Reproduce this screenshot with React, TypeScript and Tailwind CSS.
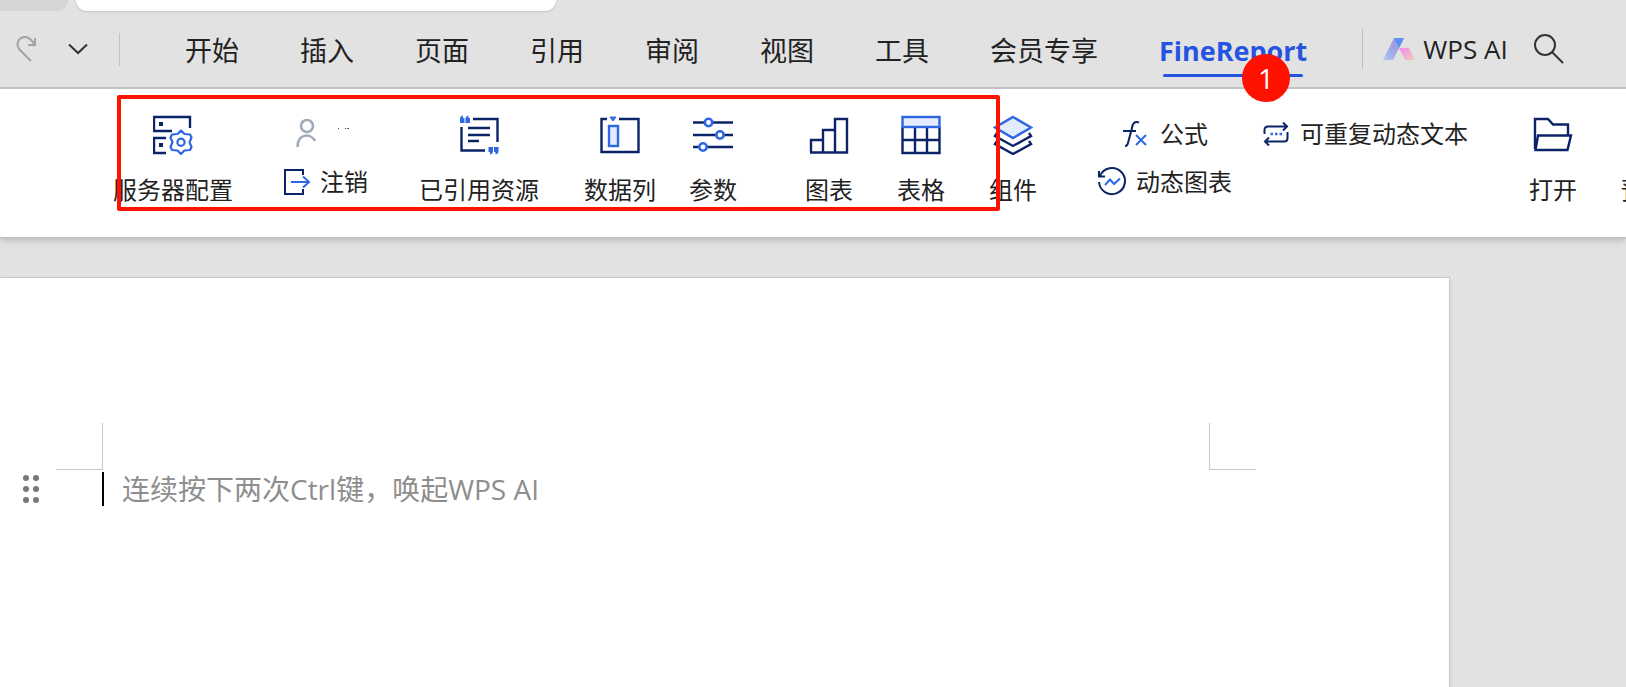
import type { ReactNode } from 'react';

const NAVY = '#0b2468';
const BLUE = '#2f66e4';

const menus = ['开始', '插入', '页面', '引用', '审阅', '视图', '工具', '会员专享'];

function ServerIcon() {
  return (
    <svg className="h-10 w-10" viewBox="0 0 40 40" fill="none" stroke={NAVY} strokeWidth="2.4">
      <path d="M37 13V2H1V16H19" />
      <path d="M13 23H1V38H13" />
      <path d="M6 9H10M6 30H10" strokeWidth="4" />
      <path
        d="M28 15.500L31.500 19L37 19.500L38.500 22.500L36.500 27.200L38.500 32L37 35L31.500 35.500L28 39L24.500 35.500L19 35L17.500 32L19.500 27.200L17.500 22.500L19 19.500L24.500 19Z"
        stroke={BLUE}
        strokeWidth="2.2"
        strokeLinejoin="round"
      />
      <circle cx="28" cy="27.2" r="3.6" stroke={BLUE} strokeWidth="2.2" />
    </svg>
  );
}

function ResourceIcon() {
  return (
    <svg className="h-10 w-10" viewBox="0 0 40 40" fill="none" stroke={NAVY} strokeWidth="2.4">
      <path d="M14 4H38.500V27M26 35.500H2.500V12" />
      <path d="M9 13H31M9 20H31M9 26H20" />
      <g fill={BLUE} stroke="none">
        <path d="M1 8V4Q1 1 4 0.500V3H5.500V8ZM6.500 8V4Q6.500 1 9.500 0.500V3H11V8Z" />
        <path d="M29.500 32H34V36Q34 39 31 39.500V37H29.500ZM35 32H39.500V36Q39.500 39 36.500 39.500V37H35Z" />
      </g>
    </svg>
  );
}

function ColumnIcon() {
  return (
    <svg className="h-10 w-10" viewBox="0 0 40 40" fill="none" stroke={NAVY} strokeWidth="2.4">
      <path d="M7 4H1.500V37H38.500V4H19" />
      <path d="M10 2H16L13 6Z" fill={BLUE} stroke={BLUE} strokeWidth="1" />
      <rect x="9" y="11" width="9" height="20" fill="#e3ecff" stroke={BLUE} />
    </svg>
  );
}

function ParamIcon() {
  return (
    <svg className="h-10 w-10" viewBox="0 0 40 40" fill="none" stroke={NAVY} strokeWidth="2.6">
      <path d="M0 7.500H40M0 20H40M0 32H40" />
      <g fill="#fff" stroke={BLUE}>
        <circle cx="15.500" cy="7.500" r="3.700" />
        <circle cx="27" cy="20" r="3.700" />
        <circle cx="10" cy="32" r="3.700" />
      </g>
    </svg>
  );
}

function ChartIcon() {
  return (
    <svg className="h-10 w-10" viewBox="0 0 40 40" fill="none" stroke={NAVY} strokeWidth="2.4">
      <path d="M2 37.500V25H14V37.500M14 25V15H26V37.500M26 15V4H38V37.500H1" />
    </svg>
  );
}

function TableIcon() {
  return (
    <svg className="h-10 w-10" viewBox="0 0 40 40" fill="none" stroke={NAVY} strokeWidth="2.4">
      <path d="M1.500 12V38H38.500V12M14 12V38M26 12V38M2 25H38" />
      <rect x="1.500" y="2" width="37" height="10" fill="#e3ecff" stroke={BLUE} />
    </svg>
  );
}

function LayersIcon() {
  return (
    <svg className="h-10 w-10" viewBox="0 0 40 40" fill="none" stroke={NAVY} strokeWidth="2.4">
      <path d="M4 18L2 21L20 31L38 21L36 18" />
      <path d="M4 26L2 29L20 39L38 29L36 26" />
      <path d="M20 2L38 12.500L20 23L2 12.500Z" fill="#e3ecff" stroke={BLUE} />
    </svg>
  );
}

function FolderIcon() {
  return (
    <svg className="h-10 w-10" viewBox="0 0 40 40" fill="none" stroke={NAVY} strokeWidth="2.4">
      <path d="M2 34V4H15L20 9.500H35V20" />
      <path d="M5 20.500H38L34.500 35H2.500Z" />
    </svg>
  );
}

function Tool({ label, className, children }: { label: string; className: string; children?: ReactNode }) {
  return (
    <button className={`flex shrink-0 flex-col items-center gap-[18px] pt-[26px] ${className}`}>
      {children}
      <span className="text-2xl leading-[34px] whitespace-nowrap">{label}</span>
    </button>
  );
}

function Corner({ className }: { className: string }) {
  return <div className={`h-[47px] w-[47px] border-b border-[#c8c8c8] ${className}`} />;
}

export default function App() {
  return (
    <div className="relative flex min-h-screen flex-col overflow-hidden bg-[#e2e2e2] font-['Open_Sans','Noto_Sans_CJK_SC',sans-serif] text-[#222]">
      <div className="flex h-[11px] gap-2">
        <div className="w-[68px] rounded-br-xl bg-[#d5d5d5]" />
        <div className="w-[480px] rounded-b-xl bg-white shadow-sm" />
      </div>

      <nav className="flex h-[78px] shrink-0 items-center border-b-2 border-[#c3c3c3]">
        <button aria-label="恢复" className="ml-4 shrink-0">
          <svg className="h-[26px] w-5" viewBox="0 0 20 26" fill="none" stroke="#a3a3a3" strokeWidth="2">
            <path d="M15 25L3.500 13.500C-1 8 3 1 9 1C13.500 1 16.500 5 19 9" />
            <path d="M19 2V9H12" />
          </svg>
        </button>
        <button aria-label="更多" className="ml-8 shrink-0">
          <svg className="h-3 w-5" viewBox="0 0 20 12" fill="none" stroke="#333" strokeWidth="2">
            <path d="M1 1.500L10 10L19 1.500" />
          </svg>
        </button>
        <div className="ml-[31px] h-[33px] w-px shrink-0 bg-[#c3c3c3]" />
        <div className="ml-[65px] flex shrink-0 items-center gap-[61px] pt-1 text-[27px] leading-10">
          {menus.map((name) => (
            <button key={name} className="whitespace-nowrap">
              {name}
            </button>
          ))}
          <button className="relative font-bold text-[#2454e0]">
            FineReport
            <span className="absolute inset-x-1 -bottom-[6px] h-[3px] rounded-full bg-[#2454e0]" />
            <span className="absolute top-[23px] left-[83px] z-20 flex h-12 w-12 items-center justify-center rounded-full bg-[#ff1100] text-[28px] font-normal text-white">
              1
            </span>
          </button>
        </div>
        <div className="ml-[55px] h-10 w-px shrink-0 bg-[#bfbfbf]" />
        <button className="ml-5 flex shrink-0 items-center gap-2 text-[26px] whitespace-nowrap">
          <svg className="h-[22px] w-8" viewBox="0 0 32 22">
            <defs>
              <linearGradient id="wing" x1="1" y1="0" x2="0" y2="1">
                <stop offset="0" stopColor="#9c9be8" />
                <stop offset="0.45" stopColor="#a29fe4" />
                <stop offset="1" stopColor="#a9c8f5" />
              </linearGradient>
              <linearGradient id="foot" x1="0" y1="0" x2="1" y2="1">
                <stop offset="0" stopColor="#f08cf0" />
                <stop offset="1" stopColor="#f5cbb5" />
              </linearGradient>
            </defs>
            <path d="M11 0H21L10 22H0Z" fill="url(#wing)" />
            <path d="M11 0H21L16 10Z" fill="#5c90f8" />
            <path d="M16 10H26L32 22H22Z" fill="url(#foot)" />
          </svg>
          WPS AI
        </button>
        <button aria-label="搜索" className="ml-[26px] shrink-0">
          <svg className="h-[30px] w-[30px]" viewBox="0 0 30 30" fill="none" stroke="#333" strokeWidth="2">
            <circle cx="11" cy="11" r="10" />
            <path d="M18 18L29 29" />
          </svg>
        </button>
      </nav>

      <div className="relative z-10 flex h-[150px] shrink-0 items-start border-b-2 border-[#c4c4c4] bg-white pl-[113px] shadow-md">
        <Tool label="服务器配置" className="">
          <ServerIcon />
        </Tool>
        <div className="ml-[51px] flex shrink-0 flex-col gap-3 pt-[27px] text-2xl leading-9">
          <button aria-label="用户" className="flex h-9 items-start gap-[22px] pt-[3px] pl-3">
            <svg className="h-7 w-5" viewBox="0 0 20 28" fill="none" stroke="#a2abba" strokeWidth="2.600">
              <circle cx="11" cy="7" r="6" />
              <path d="M1.500 28C1.500 14 15 14 19 22" />
            </svg>
            <svg className="mt-2 h-1 w-3" viewBox="0 0 12 4" fill="#555">
              <path d="M0 1H1V2H0ZM7 1H8V2H7ZM9 1H11V2H9Z" />
            </svg>
          </button>
          <button className="flex items-center gap-[9px] whitespace-nowrap">
            <svg className="h-[26px] w-[27px]" viewBox="0 0 27 26" fill="none" stroke={NAVY} strokeWidth="2">
              <path d="M19 6V1H1V25H19V20" />
              <path d="M7 13H25M19 7.500L25 13L19 18.500" stroke={BLUE} />
            </svg>
            注销
          </button>
        </div>
        <Tool label="已引用资源" className="ml-[51px]">
          <ResourceIcon />
        </Tool>
        <Tool label="数据列" className="ml-[45px]">
          <ColumnIcon />
        </Tool>
        <Tool label="参数" className="ml-[33px]">
          <ParamIcon />
        </Tool>
        <Tool label="图表" className="ml-[68px]">
          <ChartIcon />
        </Tool>
        <Tool label="表格" className="ml-11">
          <TableIcon />
        </Tool>
        <Tool label="组件" className="ml-11">
          <LayersIcon />
        </Tool>
        <div className="ml-[60px] flex shrink-0 flex-col gap-3 pt-[27px] text-2xl leading-9 whitespace-nowrap">
          <div className="flex gap-[55px] pl-[26px]">
            <button className="flex items-center gap-3">
              <svg className="h-[26px] w-[25px]" viewBox="0 0 25 26" fill="none" stroke={NAVY} strokeWidth="2">
                <path d="M16 1.500C11 0 9.500 3 9 7L5.500 20C5 23 4 25 2 25M0 10H13" />
                <path d="M13 14L23 24M23 14L13 24" stroke={BLUE} />
              </svg>
              公式
            </button>
            <button className="flex items-center gap-[11px]">
              <svg className="h-6 w-[26px]" viewBox="0 0 26 24" fill="none" stroke={NAVY} strokeWidth="2">
                <path d="M1.500 12V8Q1.500 4.500 5 4.500H24M20 0.500L24 4.500L20 8.500" />
                <path d="M24.500 10V16Q24.500 19.500 21 19.500H2M6 15.500L2 19.500L6 23.500" />
                <path d="M7.500 12H10M12 12H14.500M16.500 12H19" stroke={BLUE} strokeWidth="2.500" />
              </svg>
              可重复动态文本
            </button>
          </div>
          <button className="flex items-center gap-[9px]">
            <svg className="h-[30px] w-[30px]" viewBox="0 0 30 30" fill="none" stroke={NAVY} strokeWidth="2">
              <path d="M3 9A13 13 0 1 1 2 15M2 4V9.500H8" />
              <path d="M8 18L13 12.500L17 17L23 11.500" stroke={BLUE} />
            </svg>
            动态图表
          </button>
        </div>
        <Tool label="打开" className="ml-[61px]">
          <FolderIcon />
        </Tool>
        <Tool label="预览" className="ml-11">
          <span className="h-10" />
        </Tool>
        {/* highlight frame */}
        <div className="pointer-events-none absolute top-[6px] left-[117px] h-[116px] w-[883px] rounded-xs border-4 border-[#ff1100]" />
      </div>

      <main className="mt-[38px] mr-[176px] flex-1 border-t border-r border-[#c8c8c8] bg-white pt-[145px] shadow-md">
        <div className="flex justify-between pr-[193px] pl-14">
          <Corner className="border-r" />
          <Corner className="border-l" />
        </div>
        <div className="flex h-[38px] items-center pl-[22px]">
          <svg className="h-[30px] w-[18px]" viewBox="0 0 18 30" fill="#777">
            <circle cx="4" cy="4" r="3" />
            <circle cx="14" cy="4" r="3" />
            <circle cx="4" cy="15" r="3" />
            <circle cx="14" cy="15" r="3" />
            <circle cx="4" cy="26" r="3" />
            <circle cx="14" cy="26" r="3" />
          </svg>
          <div className="ml-[62px] h-[34px] w-[2px] bg-black" />
          <p className="ml-[18px] text-[28px] leading-10 whitespace-nowrap text-[#8e8e8e]">连续按下两次Ctrl键，唤起WPS AI</p>
        </div>
      </main>
    </div>
  );
}
